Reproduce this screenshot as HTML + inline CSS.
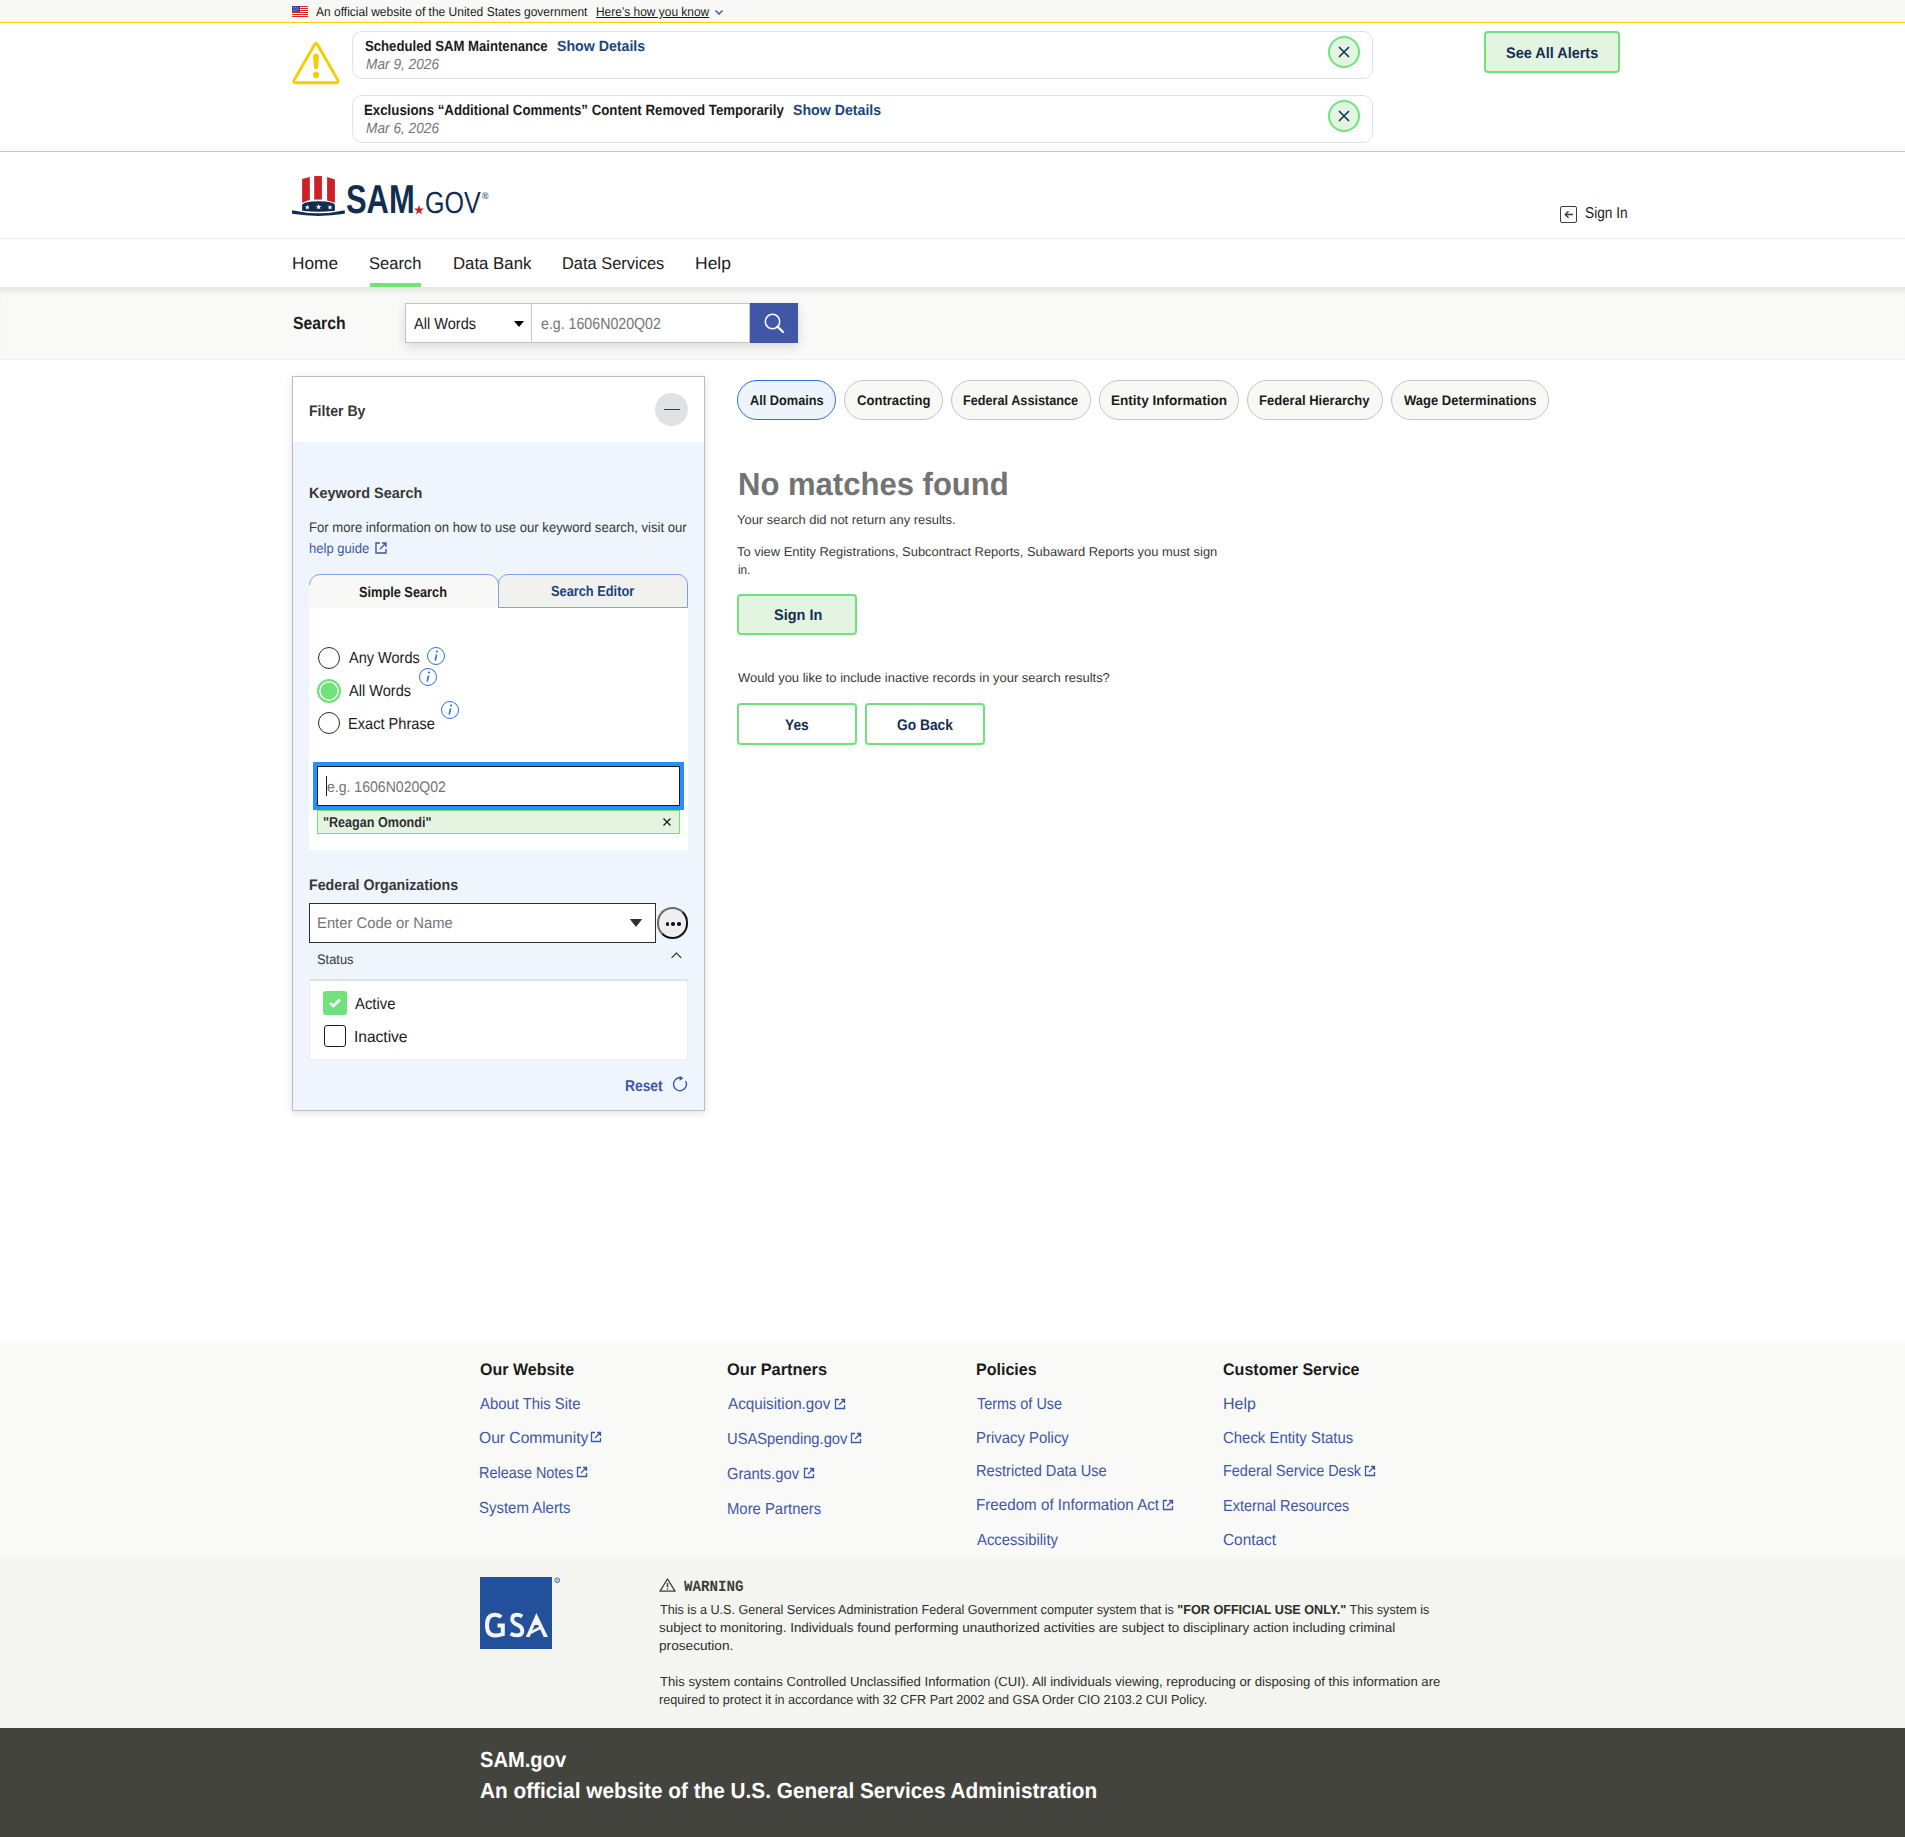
<!DOCTYPE html>
<html><head><meta charset="utf-8"><title>SAM.gov</title>
<style>
html,body{margin:0;padding:0}
body{width:1905px;height:1837px;position:relative;overflow:hidden;background:#fff;font-family:"Liberation Sans",sans-serif;color:#1b1b1b}
.t{position:absolute;white-space:nowrap;line-height:1;transform-origin:0 0;text-rendering:geometricPrecision}
.a{position:absolute;box-sizing:border-box}
svg{position:absolute;overflow:visible}
</style></head><body>
<div class="a" style="left:0;top:0;width:1905px;height:22px;background:#f8f8f6"></div>
<div class="a" style="left:0;top:22px;width:1905px;height:1px;background:#fccd07"></div>
<div class="a" style="left:0;top:151px;width:1905px;height:1px;background:#fccd07"></div>
<div class="a" style="left:0;top:238px;width:1905px;height:1px;background:#efefea"></div>
<div class="a" style="left:0;top:287px;width:1905px;height:73px;background:#f9f9f7;box-shadow:inset 0 8px 10px -7px rgba(0,0,0,.15)"></div>
<div class="a" style="left:0;top:359px;width:1905px;height:1px;background:#f0f1ea"></div>
<div class="a" style="left:0;top:1343px;width:1905px;height:214px;background:#f9f9f7"></div>
<div class="a" style="left:0;top:1557px;width:1905px;height:171px;background:#f4f5f0"></div>
<div class="a" style="left:0;top:1728px;width:1905px;height:109px;background:#44443f"></div>
<svg style="left:292px;top:6px" width="16" height="11" viewBox="0 0 16 11">
<rect width="16" height="11" fill="#fff"/>
<g fill="#d52b1e"><rect y="0" width="16" height="1"/><rect y="2" width="16" height="1"/><rect y="4" width="16" height="1"/><rect y="6" width="16" height="1"/><rect y="8" width="16" height="1"/><rect y="10" width="16" height="1"/></g>
<rect width="8" height="6" fill="#3c3b9e"/>
<g fill="#fff"><circle cx="1.5" cy="1.3" r=".45"/><circle cx="3.5" cy="1.3" r=".45"/><circle cx="5.5" cy="1.3" r=".45"/><circle cx="2.5" cy="3" r=".45"/><circle cx="4.5" cy="3" r=".45"/><circle cx="6.5" cy="3" r=".45"/><circle cx="1.5" cy="4.7" r=".45"/><circle cx="3.5" cy="4.7" r=".45"/><circle cx="5.5" cy="4.7" r=".45"/></g>
</svg>
<div class="t" style="left:316.00px;top:6px;font-size:12.791px;font-weight:400;font-style:normal;color:#1b1b1b;font-family:'Liberation Sans', sans-serif;transform:scaleX(0.9394);">An official website of the United States government</div>
<div class="t" style="left:596.00px;top:6px;font-size:12.791px;font-weight:400;font-style:normal;color:#1b1b1b;font-family:'Liberation Sans', sans-serif;transform:scaleX(0.9339);text-decoration:underline;">Here’s how you know</div>
<svg style="left:714px;top:9px" width="10" height="7" viewBox="0 0 10 7"><path d="M1.5 1.5 L5 5 L8.5 1.5" fill="none" stroke="#2a5db0" stroke-width="1.5"/></svg>
<svg style="left:292px;top:41px" width="48" height="45" viewBox="0 0 48 45">
<path d="M22.31 3.95 Q24.00 1.00 25.69 3.95 L45.71 38.85 Q47.40 41.80 44.00 41.80 L4.00 41.80 Q0.60 41.80 2.29 38.85 Z" fill="none" stroke="#f7cc00" stroke-width="2.9"/>
<path d="M21.1 15.3 Q21.1 12.8 24 12.8 Q26.9 12.8 26.9 15.3 L26.1 26.6 Q26 28.2 24 28.2 Q22 28.2 21.9 26.6 Z" fill="#f7cc00"/>
<circle cx="24" cy="33.9" r="3.1" fill="#f7cc00"/>
</svg>
<div class="a" style="left:352px;top:31px;width:1021px;height:48px;border:1px solid #dfe1e2;border-radius:10px;background:#fff"></div>
<div class="a" style="left:1328px;top:36px;width:32px;height:32px;border:2px solid #70e17b;border-radius:50%;background:#e3f5e1"></div>
<svg style="left:1338px;top:46px" width="12" height="12" viewBox="0 0 12 12"><path d="M1 1 L11 11 M11 1 L1 11" stroke="#162e51" stroke-width="1.6"/></svg>
<div class="a" style="left:352px;top:95px;width:1021px;height:48px;border:1px solid #dfe1e2;border-radius:10px;background:#fff"></div>
<div class="a" style="left:1328px;top:100px;width:32px;height:32px;border:2px solid #70e17b;border-radius:50%;background:#e3f5e1"></div>
<svg style="left:1338px;top:110px" width="12" height="12" viewBox="0 0 12 12"><path d="M1 1 L11 11 M11 1 L1 11" stroke="#162e51" stroke-width="1.6"/></svg>
<div class="t" style="left:365.20px;top:40px;font-size:14.826px;font-weight:700;font-style:normal;color:#1b1b1b;font-family:'Liberation Sans', sans-serif;transform:scaleX(0.8878);">Scheduled SAM Maintenance</div>
<div class="t" style="left:556.60px;top:40px;font-size:14.826px;font-weight:700;font-style:normal;color:#1a4480;font-family:'Liberation Sans', sans-serif;transform:scaleX(0.9565);">Show Details</div>
<div class="t" style="left:365.50px;top:58px;font-size:14.826px;font-weight:400;font-style:italic;color:#71767a;font-family:'Liberation Sans', sans-serif;transform:scaleX(0.9241);">Mar 9, 2026</div>
<div class="t" style="left:364.30px;top:104px;font-size:14.826px;font-weight:700;font-style:normal;color:#1b1b1b;font-family:'Liberation Sans', sans-serif;transform:scaleX(0.8953);">Exclusions “Additional Comments” Content Removed Temporarily</div>
<div class="t" style="left:792.60px;top:104px;font-size:14.826px;font-weight:700;font-style:normal;color:#1a4480;font-family:'Liberation Sans', sans-serif;transform:scaleX(0.9565);">Show Details</div>
<div class="t" style="left:365.50px;top:122px;font-size:14.826px;font-weight:400;font-style:italic;color:#71767a;font-family:'Liberation Sans', sans-serif;transform:scaleX(0.9241);">Mar 6, 2026</div>
<div class="a" style="left:1484px;top:31px;width:136px;height:42px;border:2px solid #70e17b;border-radius:4px;background:#e3f5e1"></div>
<div class="t" style="left:1506.00px;top:46px;font-size:15.262px;font-weight:700;font-style:normal;color:#162e51;font-family:'Liberation Sans', sans-serif;transform:scaleX(0.9485);">See All Alerts</div>
<svg style="left:292px;top:175px" width="60" height="45" viewBox="0 0 60 45">
<path d="M10.1 4.1 L17.8 1.9 L17.9 24.7 L10.1 27.7 Z" fill="#cd2026"/>
<path d="M22.2 1.05 L29.9 1.05 L29.9 24.6 L22.2 24.6 Z" fill="#cd2026"/>
<path d="M35.1 2 L42.9 4.4 L42.9 27.75 L35.1 25.6 Z" fill="#cd2026"/>
<path d="M10.1 30.5 Q10.1 26.4 26.5 26.2 Q42.9 26.4 42.9 30.5 L42.9 35.8 Q26.5 37.6 10.1 35.8 Z" fill="#112e51"/>
<path d="M0 35.3 Q26.4 41.3 52.8 35.3 L52.8 38.8 Q26.4 43 0 38.8 Z" fill="#112e51"/>
<path d="M15.30 29.70 L15.94 31.42 L17.77 31.50 L16.34 32.64 L16.83 34.40 L15.30 33.39 L13.77 34.40 L14.26 32.64 L12.83 31.50 L14.66 31.42 Z" fill="#fff"/><path d="M26.60 28.90 L27.34 30.88 L29.45 30.97 L27.80 32.29 L28.36 34.33 L26.60 33.16 L24.84 34.33 L25.40 32.29 L23.75 30.97 L25.86 30.88 Z" fill="#fff"/><path d="M38.00 29.70 L38.64 31.42 L40.47 31.50 L39.04 32.64 L39.53 34.40 L38.00 33.39 L36.47 34.40 L36.96 32.64 L35.53 31.50 L37.36 31.42 Z" fill="#fff"/>
</svg>
<div class="t" style="left:346.23px;top:180px;font-size:40.262px;font-weight:700;font-style:normal;color:#112e51;font-family:'Liberation Sans', sans-serif;transform:scaleX(0.7674);">SAM</div>
<svg style="left:414px;top:205px" width="10" height="10" viewBox="0 0 10 10"><path d="M5 0 L6.2 3.6 L10 3.6 L6.9 5.9 L8.1 9.5 L5 7.3 L1.9 9.5 L3.1 5.9 L0 3.6 L3.8 3.6 Z" fill="#cd2026"/></svg>
<div class="t" style="left:424.68px;top:188px;font-size:30.523px;font-weight:400;font-style:normal;color:#112e51;font-family:'Liberation Sans', sans-serif;transform:scaleX(0.8209);">GOV</div>
<div class="t" style="left:481.50px;top:192px;font-size:9.448px;font-weight:400;font-style:normal;color:#112e51;font-family:'Liberation Sans', sans-serif;transform:scaleX(0.9286);">®</div>
<div class="a" style="left:1560px;top:206px;width:17px;height:17px;border:1.6px solid #3d3d3d;border-radius:2px"></div>
<svg style="left:1564px;top:210px" width="10" height="9" viewBox="0 0 10 9"><path d="M9 4.5 L1.5 4.5 M4.5 1.2 L1.2 4.5 L4.5 7.8" fill="none" stroke="#3d3d3d" stroke-width="1.3"/></svg>
<div class="t" style="left:1585.33px;top:206px;font-size:15.698px;font-weight:400;font-style:normal;color:#1b1b1b;font-family:'Liberation Sans', sans-serif;transform:scaleX(0.8723);">Sign In</div>
<div class="t" style="left:291.78px;top:255px;font-size:17.006px;font-weight:400;font-style:normal;color:#1b1b1b;font-family:'Liberation Sans', sans-serif;transform:scaleX(1.0159);">Home</div>
<div class="t" style="left:369.23px;top:255px;font-size:17.006px;font-weight:400;font-style:normal;color:#1b1b1b;font-family:'Liberation Sans', sans-serif;transform:scaleX(0.9712);">Search</div>
<div class="t" style="left:452.71px;top:255px;font-size:17.006px;font-weight:400;font-style:normal;color:#1b1b1b;font-family:'Liberation Sans', sans-serif;transform:scaleX(0.9872);">Data Bank</div>
<div class="t" style="left:561.73px;top:255px;font-size:17.006px;font-weight:400;font-style:normal;color:#1b1b1b;font-family:'Liberation Sans', sans-serif;transform:scaleX(0.9663);">Data Services</div>
<div class="t" style="left:694.67px;top:255px;font-size:17.006px;font-weight:400;font-style:normal;color:#1b1b1b;font-family:'Liberation Sans', sans-serif;transform:scaleX(1.0294);">Help</div>
<div class="a" style="left:370px;top:283px;width:51px;height:4px;background:#70e17b"></div>
<div class="t" style="left:292.60px;top:315px;font-size:17.442px;font-weight:700;font-style:normal;color:#1b1b1b;font-family:'Liberation Sans', sans-serif;transform:scaleX(0.9035);">Search</div>
<div class="a" style="left:405px;top:303px;width:393px;height:40px;box-shadow:0 4px 10px rgba(0,0,0,.12)"></div>
<div class="a" style="left:405px;top:303px;width:345px;height:40px;border:1px solid #c4c4c4;background:#fff"></div>
<div class="a" style="left:531px;top:304px;width:1px;height:38px;background:#c9c9c9"></div>
<div class="t" style="left:414.00px;top:317px;font-size:15.988px;font-weight:400;font-style:normal;color:#1b1b1b;font-family:'Liberation Sans', sans-serif;transform:scaleX(0.9118);">All Words</div>
<svg style="left:514px;top:321px" width="10" height="7" viewBox="0 0 10 7"><path d="M0 0 L10 0 L5 6 Z" fill="#000"/></svg>
<div class="t" style="left:540.50px;top:317px;font-size:15.988px;font-weight:400;font-style:normal;color:#71767a;font-family:'Liberation Sans', sans-serif;transform:scaleX(0.8881);">e.g. 1606N020Q02</div>
<div class="a" style="left:750px;top:303px;width:48px;height:40px;background:#3f57a6"></div>
<svg style="left:763px;top:312px" width="22" height="22" viewBox="0 0 22 22"><circle cx="9.5" cy="9.5" r="7.2" fill="none" stroke="#fff" stroke-width="1.6"/><path d="M14.6 14.6 L20 20" stroke="#fff" stroke-width="2.2" stroke-linecap="round"/></svg>
<div class="a" style="left:292px;top:376px;width:413px;height:735px;border:1px solid #bdbdbd;background:#eef5fc;box-shadow:0 2px 8px rgba(0,0,0,.12)"></div>
<div class="a" style="left:293px;top:377px;width:411px;height:65px;background:#fff"></div>
<div class="t" style="left:309.07px;top:404px;font-size:15.262px;font-weight:700;font-style:normal;color:#383838;font-family:'Liberation Sans', sans-serif;transform:scaleX(0.9250);">Filter By</div>
<div class="a" style="left:655px;top:393px;width:33px;height:33px;border-radius:50%;background:#dfe1e2"></div>
<div class="a" style="left:663.5px;top:409px;width:16px;height:1.2px;background:#1a4480"></div>
<div class="t" style="left:309.23px;top:487px;font-size:14.971px;font-weight:700;font-style:normal;color:#383838;font-family:'Liberation Sans', sans-serif;transform:scaleX(0.9655);">Keyword Search</div>
<div class="t" style="left:309.06px;top:521px;font-size:13.953px;font-weight:400;font-style:normal;color:#383838;font-family:'Liberation Sans', sans-serif;transform:scaleX(0.9413);">For more information on how to use our keyword search, visit our</div>
<div class="t" style="left:309.06px;top:542px;font-size:13.953px;font-weight:400;font-style:normal;color:#3f57a6;font-family:'Liberation Sans', sans-serif;transform:scaleX(0.9365);">help guide</div>
<svg style="left:374px;top:541px" width="14" height="14" viewBox="0 0 14 14"><path d="M6 2 L2 2 L2 12 L12 12 L12 8 M8 2 L12 2 L12 6 M12 2 L6 8" fill="none" stroke="#3f57a6" stroke-width="1.4"/></svg>
<div class="a" style="left:309px;top:574px;width:190px;height:35px;border-radius:10px 10px 0 0;background:#f8f8f6"></div>
<svg style="left:309px;top:574px" width="190" height="35" viewBox="0 0 190 35"><path d="M0.5 11 A10.5 10.5 0 0 1 11 0.5 L179 0.5 A10.5 10.5 0 0 1 189.5 11 L189.5 35" fill="none" stroke="#7aa3ea" stroke-width="1"/></svg>
<div class="a" style="left:498px;top:574px;width:190px;height:34px;border:1px solid #7aa3ea;border-radius:10px 10px 0 0;background:#f1f2ed"></div>
<div class="t" style="left:358.62px;top:586px;font-size:14.535px;font-weight:700;font-style:normal;color:#1b1b1b;font-family:'Liberation Sans', sans-serif;transform:scaleX(0.8788);">Simple Search</div>
<div class="t" style="left:551.12px;top:585px;font-size:14.535px;font-weight:700;font-style:normal;color:#1a4480;font-family:'Liberation Sans', sans-serif;transform:scaleX(0.8817);">Search Editor</div>
<div class="a" style="left:309px;top:608px;width:379px;height:242px;background:#fff"></div>
<div class="a" style="left:318px;top:647px;width:22px;height:22px;border-radius:50%;border:1.5px solid #2b2b2b"></div>
<div class="a" style="left:317px;top:679px;width:24px;height:24px;border-radius:50%;background:#70e17b;border:2.5px solid #70e17b;box-shadow:inset 0 0 0 1.6px #fff"></div>
<div class="a" style="left:318px;top:712px;width:22px;height:22px;border-radius:50%;border:1.5px solid #2b2b2b"></div>
<div class="t" style="left:349.00px;top:651px;font-size:15.988px;font-weight:400;font-style:normal;color:#1b1b1b;font-family:'Liberation Sans', sans-serif;transform:scaleX(0.9091);">Any Words</div>
<div class="t" style="left:349.00px;top:684px;font-size:15.988px;font-weight:400;font-style:normal;color:#1b1b1b;font-family:'Liberation Sans', sans-serif;transform:scaleX(0.9118);">All Words</div>
<div class="t" style="left:348.09px;top:717px;font-size:15.988px;font-weight:400;font-style:normal;color:#1b1b1b;font-family:'Liberation Sans', sans-serif;transform:scaleX(0.9140);">Exact Phrase</div>
<div class="a" style="left:427px;top:647px;width:18px;height:18px;border:1.3px solid #2672de;border-radius:50%"></div>
<svg style="left:432px;top:650px" width="8" height="12" viewBox="0 0 8 12"><circle cx="5" cy="1.5" r="1.1" fill="#2672de"/><path d="M4.6 4.5 L3.2 10.5" stroke="#2672de" stroke-width="1.6"/></svg>
<div class="a" style="left:419px;top:668px;width:18px;height:18px;border:1.3px solid #2672de;border-radius:50%"></div>
<svg style="left:424px;top:671px" width="8" height="12" viewBox="0 0 8 12"><circle cx="5" cy="1.5" r="1.1" fill="#2672de"/><path d="M4.6 4.5 L3.2 10.5" stroke="#2672de" stroke-width="1.6"/></svg>
<div class="a" style="left:441px;top:701px;width:18px;height:18px;border:1.3px solid #2672de;border-radius:50%"></div>
<svg style="left:446px;top:704px" width="8" height="12" viewBox="0 0 8 12"><circle cx="5" cy="1.5" r="1.1" fill="#2672de"/><path d="M4.6 4.5 L3.2 10.5" stroke="#2672de" stroke-width="1.6"/></svg>
<div class="a" style="left:313px;top:762px;width:371px;height:48px;border:4px solid #2491ff;background:#fff"></div>
<div class="a" style="left:317px;top:766px;width:363px;height:40px;border:1px solid #1b1b1b;background:#fff"></div>
<div class="a" style="left:326px;top:776px;width:1px;height:20px;background:#1b1b1b"></div>
<div class="t" style="left:326.50px;top:780px;font-size:15.262px;font-weight:400;font-style:normal;color:#71767a;font-family:'Liberation Sans', sans-serif;transform:scaleX(0.9225);">e.g. 1606N020Q02</div>
<div class="a" style="left:317px;top:810px;width:363px;height:24px;border:1px solid #70e17b;background:#e3f5e1"></div>
<div class="t" style="left:322.62px;top:816px;font-size:14.244px;font-weight:700;font-style:normal;color:#2e2e2e;font-family:'Liberation Sans', sans-serif;transform:scaleX(0.8843);">&quot;Reagan Omondi&quot;</div>
<svg style="left:663px;top:818px" width="8" height="8" viewBox="0 0 8 8"><path d="M0.5 0.5 L7.5 7.5 M7.5 0.5 L0.5 7.5" stroke="#1b1b1b" stroke-width="1.3"/></svg>
<div class="t" style="left:309.27px;top:878px;font-size:15.262px;font-weight:700;font-style:normal;color:#383838;font-family:'Liberation Sans', sans-serif;transform:scaleX(0.9308);">Federal Organizations</div>
<div class="a" style="left:309px;top:903px;width:347px;height:40px;border:1px solid #2e2e2a;background:#fff"></div>
<div class="t" style="left:317.03px;top:916px;font-size:15.262px;font-weight:400;font-style:normal;color:#71767a;font-family:'Liberation Sans', sans-serif;transform:scaleX(0.9710);">Enter Code or Name</div>
<svg style="left:630px;top:919px" width="13" height="9" viewBox="0 0 13 9"><path d="M0.6 0.5 L11.4 0.5 L6 7.3 Z" fill="#2e2e2a" stroke="#2e2e2a" stroke-width="1" stroke-linejoin="round"/></svg>
<div class="a" style="left:656.5px;top:907px;width:31.5px;height:31.5px;border:2px solid;border-color:#6a6a6a #111 #111 #6a6a6a;border-radius:50%;background:#efefef"></div>
<div class="a" style="left:665.60px;top:922.3px;width:3.6px;height:3.6px;border-radius:50%;background:#111"></div>
<div class="a" style="left:671.30px;top:922.3px;width:3.6px;height:3.6px;border-radius:50%;background:#111"></div>
<div class="a" style="left:677.10px;top:922.3px;width:3.6px;height:3.6px;border-radius:50%;background:#111"></div>
<div class="t" style="left:316.57px;top:953px;font-size:13.808px;font-weight:400;font-style:normal;color:#3a3a3a;font-family:'Liberation Sans', sans-serif;transform:scaleX(0.9342);">Status</div>
<svg style="left:670px;top:951px" width="13" height="8" viewBox="0 0 13 8"><path d="M1.6 6.8 L6.4 2 L11.2 6.8" fill="none" stroke="#2a2a2a" stroke-width="1.1"/></svg>
<div class="a" style="left:309px;top:979px;width:379px;height:81px;border:1px solid #ededed;border-top:2px solid #e3e3e3;background:#fff"></div>
<div class="a" style="left:323px;top:991px;width:24px;height:24px;border-radius:3px;background:#70e17b"></div>
<svg style="left:328px;top:997px" width="14" height="12" viewBox="0 0 14 12"><path d="M2 6 L5.5 9 L12 2.5" fill="none" stroke="#fff" stroke-width="2.6"/></svg>
<div class="t" style="left:355.00px;top:997px;font-size:15.988px;font-weight:400;font-style:normal;color:#1b1b1b;font-family:'Liberation Sans', sans-serif;transform:scaleX(0.9302);">Active</div>
<div class="a" style="left:324px;top:1025px;width:22px;height:22px;border:1.5px solid #1b1b1b;border-radius:3px;background:#fff"></div>
<div class="t" style="left:354.03px;top:1030px;font-size:15.988px;font-weight:400;font-style:normal;color:#1b1b1b;font-family:'Liberation Sans', sans-serif;transform:scaleX(0.9722);">Inactive</div>
<div class="t" style="left:624.62px;top:1079px;font-size:15.698px;font-weight:700;font-style:normal;color:#3f57a6;font-family:'Liberation Sans', sans-serif;transform:scaleX(0.8810);">Reset</div>
<svg style="left:672px;top:1076px" width="17" height="17" viewBox="0 0 17 17"><path d="M8.2 1.7 A6.5 6.5 0 1 0 13.6 5" fill="none" stroke="#3f57a6" stroke-width="1.4"/><path d="M7.6 -0.2 L11.4 2.3 L7.6 4.8 Z" fill="#3f57a6"/></svg>
<div class="a" style="left:737px;top:380px;width:99px;height:40px;border:1.5px solid #2a73d4;border-radius:20px;background:#edf4fb"></div>
<div class="t" style="left:750.00px;top:394px;font-size:13.808px;font-weight:700;font-style:normal;color:#1b1b1b;font-family:'Liberation Sans', sans-serif;transform:scaleX(0.9241);">All Domains</div>
<div class="a" style="left:844px;top:380px;width:99px;height:40px;border:1px solid #c6c6c6;border-radius:20px;background:#f8f8f5"></div>
<div class="t" style="left:857.00px;top:394px;font-size:13.808px;font-weight:700;font-style:normal;color:#1b1b1b;font-family:'Liberation Sans', sans-serif;transform:scaleX(0.9481);">Contracting</div>
<div class="a" style="left:951px;top:380px;width:140px;height:40px;border:1px solid #c6c6c6;border-radius:20px;background:#f8f8f5"></div>
<div class="t" style="left:963.08px;top:394px;font-size:13.808px;font-weight:700;font-style:normal;color:#1b1b1b;font-family:'Liberation Sans', sans-serif;transform:scaleX(0.9194);">Federal Assistance</div>
<div class="a" style="left:1099px;top:380px;width:140px;height:40px;border:1px solid #c6c6c6;border-radius:20px;background:#f8f8f5"></div>
<div class="t" style="left:1111.02px;top:394px;font-size:13.808px;font-weight:700;font-style:normal;color:#1b1b1b;font-family:'Liberation Sans', sans-serif;transform:scaleX(0.9828);">Entity Information</div>
<div class="a" style="left:1247px;top:380px;width:136px;height:40px;border:1px solid #c6c6c6;border-radius:20px;background:#f8f8f5"></div>
<div class="t" style="left:1259.05px;top:394px;font-size:13.808px;font-weight:700;font-style:normal;color:#1b1b1b;font-family:'Liberation Sans', sans-serif;transform:scaleX(0.9483);">Federal Hierarchy</div>
<div class="a" style="left:1391px;top:380px;width:158px;height:40px;border:1px solid #c6c6c6;border-radius:20px;background:#f8f8f5"></div>
<div class="t" style="left:1404.00px;top:394px;font-size:13.808px;font-weight:700;font-style:normal;color:#1b1b1b;font-family:'Liberation Sans', sans-serif;transform:scaleX(0.9429);">Wage Determinations</div>
<div class="t" style="left:737.56px;top:468px;font-size:31.977px;font-weight:700;font-style:normal;color:#737373;font-family:'Liberation Sans', sans-serif;transform:scaleX(0.9709);">No matches found</div>
<div class="t" style="left:736.90px;top:514px;font-size:12.791px;font-weight:400;font-style:normal;color:#383838;font-family:'Liberation Sans', sans-serif;transform:scaleX(1.0140);">Your search did not return any results.</div>
<div class="t" style="left:737.00px;top:546px;font-size:12.791px;font-weight:400;font-style:normal;color:#383838;font-family:'Liberation Sans', sans-serif;transform:scaleX(1.0105);">To view Entity Registrations, Subcontract Reports, Subaward Reports you must sign</div>
<div class="t" style="left:737.68px;top:564px;font-size:12.791px;font-weight:400;font-style:normal;color:#383838;font-family:'Liberation Sans', sans-serif;transform:scaleX(0.9167);">in.</div>
<div class="a" style="left:737px;top:594px;width:120px;height:41px;border:2px solid #70e17b;border-radius:4px;background:#e3f5e1"></div>
<div class="t" style="left:773.50px;top:608px;font-size:15.262px;font-weight:700;font-style:normal;color:#162e51;font-family:'Liberation Sans', sans-serif;transform:scaleX(0.9500);">Sign In</div>
<div class="t" style="left:737.50px;top:672px;font-size:12.791px;font-weight:400;font-style:normal;color:#383838;font-family:'Liberation Sans', sans-serif;transform:scaleX(1.0150);">Would you like to include inactive records in your search results?</div>
<div class="a" style="left:737px;top:703px;width:120px;height:42px;border:2px solid #70e17b;border-radius:4px;background:#fff"></div>
<div class="a" style="left:865px;top:703px;width:120px;height:42px;border:2px solid #70e17b;border-radius:4px;background:#fff"></div>
<div class="t" style="left:785.10px;top:718px;font-size:15.262px;font-weight:700;font-style:normal;color:#162e51;font-family:'Liberation Sans', sans-serif;transform:scaleX(0.9000);">Yes</div>
<div class="t" style="left:897.00px;top:718px;font-size:15.262px;font-weight:700;font-style:normal;color:#162e51;font-family:'Liberation Sans', sans-serif;transform:scaleX(0.9032);">Go Back</div>
<div class="t" style="left:479.54px;top:1362px;font-size:16.715px;font-weight:700;font-style:normal;color:#1b1b1b;font-family:'Liberation Sans', sans-serif;transform:scaleX(0.9588);">Our Website</div>
<div class="t" style="left:727.02px;top:1362px;font-size:16.715px;font-weight:700;font-style:normal;color:#1b1b1b;font-family:'Liberation Sans', sans-serif;transform:scaleX(0.9802);">Our Partners</div>
<div class="t" style="left:975.54px;top:1362px;font-size:16.715px;font-weight:700;font-style:normal;color:#1b1b1b;font-family:'Liberation Sans', sans-serif;transform:scaleX(0.9597);">Policies</div>
<div class="t" style="left:1223.04px;top:1362px;font-size:16.715px;font-weight:700;font-style:normal;color:#1b1b1b;font-family:'Liberation Sans', sans-serif;transform:scaleX(0.9610);">Customer Service</div>
<div class="t" style="left:479.90px;top:1397px;font-size:15.988px;font-weight:400;font-style:normal;color:#3f57a6;font-family:'Liberation Sans', sans-serif;transform:scaleX(0.9299);">About This Site</div>
<div class="t" style="left:478.92px;top:1431px;font-size:15.988px;font-weight:400;font-style:normal;color:#3f57a6;font-family:'Liberation Sans', sans-serif;transform:scaleX(0.9775);">Our Community</div>
<svg style="left:590px;top:1431px" width="12" height="12" viewBox="0 0 12 12"><path d="M5 1.5 L1.5 1.5 L1.5 10.5 L10.5 10.5 L10.5 7 M7 1.5 L10.5 1.5 L10.5 5 M10.5 1.5 L5 7" fill="none" stroke="#3f57a6" stroke-width="1.3"/></svg>
<div class="t" style="left:479.00px;top:1466px;font-size:15.988px;font-weight:400;font-style:normal;color:#3f57a6;font-family:'Liberation Sans', sans-serif;transform:scaleX(0.9029);">Release Notes</div>
<svg style="left:576px;top:1466px" width="12" height="12" viewBox="0 0 12 12"><path d="M5 1.5 L1.5 1.5 L1.5 10.5 L10.5 10.5 L10.5 7 M7 1.5 L10.5 1.5 L10.5 5 M10.5 1.5 L5 7" fill="none" stroke="#3f57a6" stroke-width="1.3"/></svg>
<div class="t" style="left:478.96px;top:1501px;font-size:15.988px;font-weight:400;font-style:normal;color:#3f57a6;font-family:'Liberation Sans', sans-serif;transform:scaleX(0.9375);">System Alerts</div>
<div class="t" style="left:728.00px;top:1397px;font-size:15.988px;font-weight:400;font-style:normal;color:#3f57a6;font-family:'Liberation Sans', sans-serif;transform:scaleX(0.9533);">Acquisition.gov</div>
<svg style="left:834px;top:1398px" width="12" height="12" viewBox="0 0 12 12"><path d="M5 1.5 L1.5 1.5 L1.5 10.5 L10.5 10.5 L10.5 7 M7 1.5 L10.5 1.5 L10.5 5 M10.5 1.5 L5 7" fill="none" stroke="#3f57a6" stroke-width="1.3"/></svg>
<div class="t" style="left:727.08px;top:1432px;font-size:15.988px;font-weight:400;font-style:normal;color:#3f57a6;font-family:'Liberation Sans', sans-serif;transform:scaleX(0.9225);">USASpending.gov</div>
<svg style="left:850px;top:1432px" width="12" height="12" viewBox="0 0 12 12"><path d="M5 1.5 L1.5 1.5 L1.5 10.5 L10.5 10.5 L10.5 7 M7 1.5 L10.5 1.5 L10.5 5 M10.5 1.5 L5 7" fill="none" stroke="#3f57a6" stroke-width="1.3"/></svg>
<div class="t" style="left:727.08px;top:1467px;font-size:15.988px;font-weight:400;font-style:normal;color:#3f57a6;font-family:'Liberation Sans', sans-serif;transform:scaleX(0.9221);">Grants.gov</div>
<svg style="left:803px;top:1467px" width="12" height="12" viewBox="0 0 12 12"><path d="M5 1.5 L1.5 1.5 L1.5 10.5 L10.5 10.5 L10.5 7 M7 1.5 L10.5 1.5 L10.5 5 M10.5 1.5 L5 7" fill="none" stroke="#3f57a6" stroke-width="1.3"/></svg>
<div class="t" style="left:727.07px;top:1502px;font-size:15.988px;font-weight:400;font-style:normal;color:#3f57a6;font-family:'Liberation Sans', sans-serif;transform:scaleX(0.9300);">More Partners</div>
<div class="t" style="left:976.50px;top:1397px;font-size:15.988px;font-weight:400;font-style:normal;color:#3f57a6;font-family:'Liberation Sans', sans-serif;transform:scaleX(0.9043);">Terms of Use</div>
<div class="t" style="left:975.57px;top:1431px;font-size:15.988px;font-weight:400;font-style:normal;color:#3f57a6;font-family:'Liberation Sans', sans-serif;transform:scaleX(0.9337);">Privacy Policy</div>
<div class="t" style="left:975.59px;top:1464px;font-size:15.988px;font-weight:400;font-style:normal;color:#3f57a6;font-family:'Liberation Sans', sans-serif;transform:scaleX(0.9149);">Restricted Data Use</div>
<div class="t" style="left:975.55px;top:1498px;font-size:15.988px;font-weight:400;font-style:normal;color:#3f57a6;font-family:'Liberation Sans', sans-serif;transform:scaleX(0.9505);">Freedom of Information Act</div>
<svg style="left:1162px;top:1499px" width="12" height="12" viewBox="0 0 12 12"><path d="M5 1.5 L1.5 1.5 L1.5 10.5 L10.5 10.5 L10.5 7 M7 1.5 L10.5 1.5 L10.5 5 M10.5 1.5 L5 7" fill="none" stroke="#3f57a6" stroke-width="1.3"/></svg>
<div class="t" style="left:976.50px;top:1533px;font-size:15.988px;font-weight:400;font-style:normal;color:#3f57a6;font-family:'Liberation Sans', sans-serif;transform:scaleX(0.9310);">Accessibility</div>
<div class="t" style="left:1223.00px;top:1397px;font-size:15.988px;font-weight:400;font-style:normal;color:#3f57a6;font-family:'Liberation Sans', sans-serif;transform:scaleX(1.0000);">Help</div>
<div class="t" style="left:1223.07px;top:1431px;font-size:15.988px;font-weight:400;font-style:normal;color:#3f57a6;font-family:'Liberation Sans', sans-serif;transform:scaleX(0.9348);">Check Entity Status</div>
<div class="t" style="left:1223.10px;top:1464px;font-size:15.988px;font-weight:400;font-style:normal;color:#3f57a6;font-family:'Liberation Sans', sans-serif;transform:scaleX(0.9046);">Federal Service Desk</div>
<svg style="left:1364px;top:1465px" width="12" height="12" viewBox="0 0 12 12"><path d="M5 1.5 L1.5 1.5 L1.5 10.5 L10.5 10.5 L10.5 7 M7 1.5 L10.5 1.5 L10.5 5 M10.5 1.5 L5 7" fill="none" stroke="#3f57a6" stroke-width="1.3"/></svg>
<div class="t" style="left:1223.09px;top:1499px;font-size:15.988px;font-weight:400;font-style:normal;color:#3f57a6;font-family:'Liberation Sans', sans-serif;transform:scaleX(0.9058);">External Resources</div>
<div class="t" style="left:1223.04px;top:1533px;font-size:15.988px;font-weight:400;font-style:normal;color:#3f57a6;font-family:'Liberation Sans', sans-serif;transform:scaleX(0.9630);">Contact</div>
<div class="a" style="left:480px;top:1577px;width:72px;height:72px;background:#22509b"></div>
<svg style="left:480px;top:1577px" width="72" height="72" viewBox="0 0 72 72">
<path d="M21.2 40.2 Q18.8 37.8 15.2 37.8 Q7 37.8 7 48.2 Q7 58.5 15.2 58.5 Q19 58.5 22.8 57.2 L22.8 48.6 L17.5 48.6" fill="none" stroke="#f5f5f0" stroke-width="4"/>
<path d="M42.2 39.6 Q39.8 37.8 37 37.8 Q32.2 37.8 32.2 42.3 Q32.2 45.5 37 47.6 Q42.3 49.8 42.3 53.8 Q42.3 58.4 36.6 58.4 Q33.3 58.4 30.6 56.6" fill="none" stroke="#f5f5f0" stroke-width="3.9"/>
<path d="M45.8 60 L56.4 36 L68 60 L63.7 60 L56.4 44 L52.3 53.3 L59.4 49.6 L60.3 52.2 L51 56.9 L49.7 60 Z" fill="#f5f5f0"/>
<path d="M51.8 48 L53.6 44 L59.2 44 L61 48 Z" fill="#f5f5f0"/>
</svg>
<svg style="left:554px;top:1577px" width="7" height="7" viewBox="0 0 7 7"><circle cx="3.2" cy="3.3" r="2.4" fill="none" stroke="#22509b" stroke-width="0.8"/><text x="2.1" y="4.6" font-size="3.6" font-family="Liberation Sans" fill="#22509b">R</text></svg>
<svg style="left:659px;top:1578px" width="17" height="14" viewBox="0 0 17 14"><path d="M8.5 1 L16 13.2 L1 13.2 Z" fill="none" stroke="#3d3d3d" stroke-width="1.3" stroke-linejoin="round"/><path d="M8.5 5 L8.5 9.2" stroke="#3d3d3d" stroke-width="1.5"/><circle cx="8.5" cy="11" r=".8" fill="#3d3d3d"/></svg>
<div class="t" style="left:683.60px;top:1580px;font-size:15.630px;font-weight:700;font-style:normal;color:#3d3d3d;font-family:'Liberation Mono', monospace;transform:scaleX(0.9077);">WARNING</div>
<div class="t" style="left:659.70px;top:1603px;font-size:13.081px;font-weight:400;font-style:normal;color:#2d2d2d;font-family:'Liberation Sans', sans-serif;transform:scaleX(0.9643);">This is a U.S. General Services Administration Federal Government computer system that is <b>"FOR OFFICIAL USE ONLY."</b> This system is</div>
<div class="t" style="left:658.67px;top:1621px;font-size:13.081px;font-weight:400;font-style:normal;color:#2d2d2d;font-family:'Liberation Sans', sans-serif;transform:scaleX(1.0251);">subject to monitoring. Individuals found performing unauthorized activities are subject to disciplinary action including criminal</div>
<div class="t" style="left:658.66px;top:1639px;font-size:13.081px;font-weight:400;font-style:normal;color:#2d2d2d;font-family:'Liberation Sans', sans-serif;transform:scaleX(1.0435);">prosecution.</div>
<div class="t" style="left:659.70px;top:1675px;font-size:13.081px;font-weight:400;font-style:normal;color:#2d2d2d;font-family:'Liberation Sans', sans-serif;transform:scaleX(1.0052);">This system contains Controlled Unclassified Information (CUI). All individuals viewing, reproducing or disposing of this information are</div>
<div class="t" style="left:658.74px;top:1693px;font-size:13.081px;font-weight:400;font-style:normal;color:#2d2d2d;font-family:'Liberation Sans', sans-serif;transform:scaleX(0.9647);">required to protect it in accordance with 32 CFR Part 2002 and GSA Order CIO 2103.2 CUI Policy.</div>
<div class="t" style="left:480.48px;top:1749px;font-size:21.802px;font-weight:700;font-style:normal;color:#fff;font-family:'Liberation Sans', sans-serif;transform:scaleX(0.9239);">SAM.gov</div>
<div class="t" style="left:480.25px;top:1780px;font-size:21.802px;font-weight:700;font-style:normal;color:#fff;font-family:'Liberation Sans', sans-serif;transform:scaleX(0.9535);">An official website of the U.S. General Services Administration</div>
</body></html>
